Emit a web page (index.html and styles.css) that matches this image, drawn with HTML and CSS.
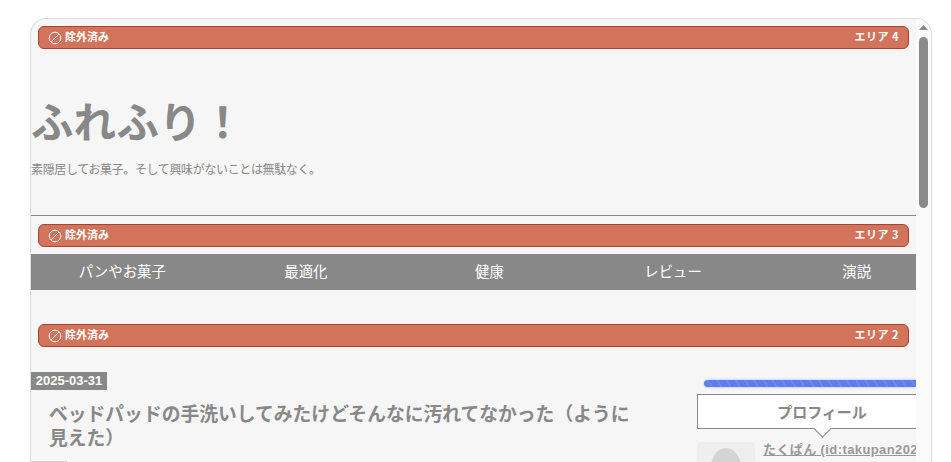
FILE: index.html
```html
<!DOCTYPE html>
<html lang="ja">
<head>
<meta charset="utf-8">
<title>ふれふり！</title>
<link rel="stylesheet" href="styles.css">
</head>
<body>
<div class="frame">
  <div class="page">
    <div class="zone zone-first">
      <span class="zone-status"><svg class="zone-icon" viewBox="0 0 14 14"><circle cx="7" cy="7" r="5.8"/><line x1="3.1" y1="10.9" x2="10.9" y2="3.1"/></svg>除外済み</span>
      <span class="zone-name">エリア 4</span>
    </div>
    <header class="masthead">
      <h1 class="site-title">ふれふり！</h1>
      <p class="site-tag">素隠居してお菓子。そして興味がないことは無駄なく。</p>
    </header>
    <div class="zone zone-second">
      <span class="zone-status"><svg class="zone-icon" viewBox="0 0 14 14"><circle cx="7" cy="7" r="5.8"/><line x1="3.1" y1="10.9" x2="10.9" y2="3.1"/></svg>除外済み</span>
      <span class="zone-name">エリア 3</span>
    </div>
    <nav class="nav">
      <a class="nav-item">パンやお菓子</a>
      <a class="nav-item">最適化</a>
      <a class="nav-item">健康</a>
      <a class="nav-item">レビュー</a>
      <a class="nav-item">演説</a>
    </nav>
    <div class="zone zone-third">
      <span class="zone-status"><svg class="zone-icon" viewBox="0 0 14 14"><circle cx="7" cy="7" r="5.8"/><line x1="3.1" y1="10.9" x2="10.9" y2="3.1"/></svg>除外済み</span>
      <span class="zone-name">エリア 2</span>
    </div>
    <div class="columns">
      <main class="article">
        <div class="date">2025-03-31</div>
        <h2 class="entry-title">ベッドパッドの手洗いしてみたけどそんなに汚れてなかった（ように見えた）</h2>
        <div class="entry-tag"></div>
      </main>
      <aside class="side">
        <div class="rope"></div>
        <div class="side-head">プロフィール</div>
        <div class="profile">
          <div class="avatar"><span class="avatar-shape"></span></div>
          <a class="profile-name">たくぱん (id:takupan2022)</a>
        </div>
      </aside>
    </div>
  </div>
  <div class="scrollbar">
    <svg class="scroll-arrow" viewBox="0 0 15 9"><polygon points="7.5,1 12,6 3,6"/></svg>
    <div class="scroll-thumb"></div>
  </div>
</div>
</body>
</html>
```
FILE: styles.css
```css
html, body { margin: 0; padding: 0; height: 100%; background: #fff; overflow: hidden; }
body { font-family: "Noto Sans CJK JP", "Liberation Sans", sans-serif; }
.frame {
  box-sizing: border-box;
  display: flex;
  width: 902px;
  height: 444px;
  margin: 18px 0 0 30px;
  background: #f6f6f6;
  border: 1px solid #dcdcdc;
  border-bottom: 0;
  border-radius: 16px 16px 0 0;
  overflow: hidden;
}
.page { width: 885px; flex: none; overflow: hidden; }
.zone {
  box-sizing: border-box;
  display: flex;
  justify-content: space-between;
  align-items: center;
  height: 23.4px;
  margin: 0 7px;
  padding: 0 9px 3px 10px;
  background: #d2735c;
  border: 1px solid #a9432f;
  border-radius: 6px;
  color: #fff;
  font-size: 11px;
  font-weight: 700;
  line-height: 1;
}
.zone-first { margin-top: 7px; }
.zone-second { margin-top: 8px; }
.zone-third { margin-top: 34px; }
.zone-status { display: flex; align-items: center; gap: 3px; }
.zone-name { letter-spacing: 0.5px; }
.zone-icon { width: 14px; height: 14px; margin-left: -1px; position: relative; top: 2px; fill: none; stroke: #fff; stroke-width: 1; }
.masthead { box-sizing: border-box; height: 166.6px; padding-top: 43px; border-bottom: 1px solid #888; }
.site-title { margin: 0; color: #888; font-size: 42.5px; font-weight: 700; line-height: 56px; }
.site-tag { margin: 12px 0 0; color: #888; font-size: 12px; line-height: 18px; letter-spacing: -0.37px; }
.nav {
  display: flex;
  width: 918px;
  height: 36px;
  margin: 6.6px 0 0 -0.5px;
  background: #888;
  color: #fff;
  font-size: 14.4px;
  line-height: 33px;
}
.nav-item { flex: 1; text-align: center; }
.columns { display: flex; width: 920px; margin-top: 24.6px; }
.article { width: 666px; flex: none; }
.date {
  width: 76px;
  height: 18px;
  background: #888;
  color: #fff;
  font-family: "Liberation Sans", sans-serif;
  font-size: 13px;
  font-weight: 700;
  line-height: 18px;
  text-align: center;
}
.entry-title {
  margin: 11px 0 0 18px;
  width: 590px;
  color: #888;
  font-size: 18.8px;
  font-weight: 700;
  line-height: 24px;
}
.entry-tag { width: 36px; height: 2px; margin-top: 12px; background: #d4d4d4; }
.side { width: 250px; flex: none; padding-top: 8px; }
.rope {
  height: 7px;
  margin-left: 7px;
  border-radius: 4px 0 0 4px;
  background: repeating-linear-gradient(60deg, #5f7df2 0 6px, #7288e0 6px 8px);
  box-shadow: 0 0 3px #a9b8f7;
}
.side-head {
  box-sizing: border-box;
  height: 35px;
  margin-top: 7px;
  background: #fff;
  border: 1px solid #888;
  color: #888;
  font-size: 15px;
  font-weight: 700;
  line-height: 33px;
  text-align: center;
  position: relative;
}
.side-head::after {
  content: "";
  position: absolute;
  left: 118px;
  bottom: -7px;
  width: 12px;
  height: 12px;
  background: #fff;
  border-right: 1px solid #888;
  border-bottom: 1px solid #888;
  transform: rotate(45deg);
}
.profile { display: flex; gap: 8px; margin-top: 13px; }
.avatar { position: relative; width: 58px; height: 60px; flex: none; background: #eee; border-radius: 4px; overflow: hidden; }
.avatar-shape { position: absolute; left: 14px; top: 6px; width: 30px; height: 40px; border-radius: 50%; background: #d4d4d4; }
.profile-name { color: #999; font-family: "Liberation Sans", "Noto Sans CJK JP", sans-serif; font-size: 13px; font-weight: 700; line-height: 16px; letter-spacing: 0.4px; text-decoration: underline; white-space: nowrap; }
.scrollbar { flex: 1; display: flex; flex-direction: column; align-items: center; background: #fbfbfb; }
.scroll-arrow { width: 15px; height: 9px; margin-top: 5px; fill: #888; flex: none; }
.scroll-thumb { width: 9px; height: 171px; margin-top: 4px; background: #8a8a8a; border-radius: 4.5px; }
```
